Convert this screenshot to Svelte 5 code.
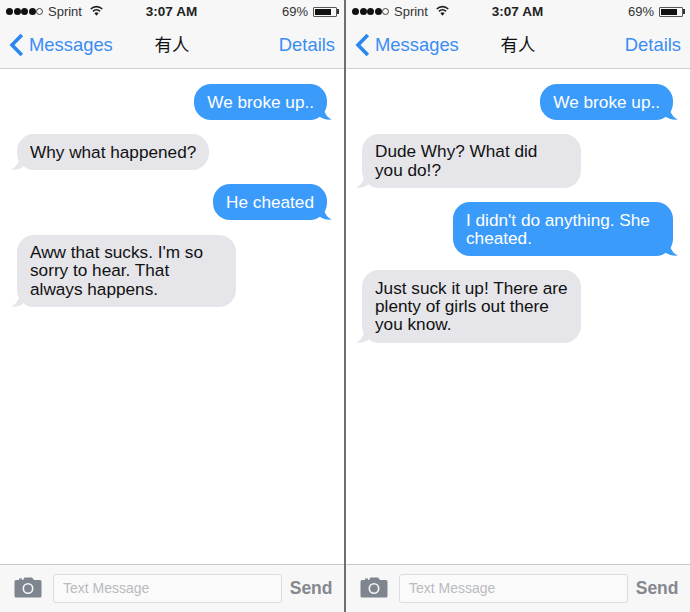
<script>
  const phones = [
    [
      { me: true, text: 'We broke up..' },
      { me: false, text: 'Why what happened?' },
      { me: true, text: 'He cheated' },
      { me: false, text: "Aww that sucks. I'm so sorry to hear. That always happens." }
    ],
    [
      { me: true, text: 'We broke up..' },
      { me: false, text: 'Dude Why? What did you do!?' },
      { me: true, text: "I didn't do anything. She cheated." },
      { me: false, text: 'Just suck it up! There are plenty of girls out there you know.' }
    ]
  ];
</script>

<div class="screens">
  {#each phones as messages}
    <section class="phone">
      <div class="top">
        <div class="status">
          <div class="left">
            <span class="dots">
              <i></i><i></i><i></i><i></i><i class="empty"></i>
            </span>
            <span class="carrier">Sprint</span>
            <svg class="wifi" width="13" height="11" viewBox="0 0 13 11">
              <path d="M0.8 4 A8 8 0 0 1 12.2 4" fill="none" stroke="#222" stroke-width="1.7" />
              <path d="M3 6.3 A5 5 0 0 1 10 6.3" fill="none" stroke="#222" stroke-width="1.7" />
              <path d="M6.5 10.8 L4.4 8.3 A2.9 2.9 0 0 1 8.6 8.3 Z" fill="#222" />
            </svg>
          </div>
          <div class="time">3:07 AM</div>
          <div class="right">
            <span>69%</span>
            <span class="battery"><b></b></span>
          </div>
        </div>
        <nav class="nav">
          <div class="back">
            <svg width="15" height="24" viewBox="0 0 15 24">
              <path d="M12.8 2 L3 12 L12.8 22" fill="none" stroke="#2b87f0" stroke-width="3.6" />
            </svg>
            <span>Messages</span>
          </div>
          <div class="title">有人</div>
          <div class="details">Details</div>
        </nav>
      </div>

      <div class="thread">
        {#each messages as m}
          <div class="bubble" class:me={m.me}>
            {m.text}
            <svg class="tail" width="12" height="10" viewBox="0 0 12 10">
              <path d="M0 0 L4 0 C5 4 8 8 12 9.5 C7 10 3 9 0 7 Z" />
            </svg>
          </div>
        {/each}
      </div>

      <div class="bottom">
        <svg class="camera" width="28" height="21" viewBox="0 0 28 21">
          <path fill-rule="evenodd" fill="#7f858e" d="M3 3 H5 V1.5 H8 V3 H9 L10.5 0.5 H18 L20 3 H26 Q27.5 3 27.5 4.5 V19 Q27.5 20.5 26 20.5 H2 Q0.5 20.5 0.5 19 V4.5 Q0.5 3 2 3 Z M14 6 A5.5 5.5 0 1 0 14 17 A5.5 5.5 0 1 0 14 6 Z M14 7.6 A3.9 3.9 0 1 1 14 15.4 A3.9 3.9 0 1 1 14 7.6 Z" />
        </svg>
        <div class="input">Text Message</div>
        <div class="send">Send</div>
      </div>
    </section>
  {/each}
</div>

<style>
  :global(body) {
    margin: 0;
    background: #fff;
  }

  .screens {
    display: flex;
    width: 690px;
    height: 612px;
    font-family: "Liberation Sans", Arial, sans-serif;
  }

  .phone {
    flex: 1;
    display: flex;
    flex-direction: column;
    min-width: 0;
  }

  .phone:first-child {
    border-right: 2px solid #6e6e6e;
  }

  .phone:last-child .thread {
    padding-left: 16px;
    gap: 13.9px;
  }

  .top {
    height: 68px;
    background: #f7f7f8;
    border-bottom: 1px solid #cfcfd1;
    flex-shrink: 0;
  }

  .status {
    display: grid;
    grid-template-columns: 1fr auto 1fr;
    align-items: center;
    height: 23px;
    padding: 0 7px 0 6px;
    font-size: 13px;
    color: #333;
  }

  .left {
    display: flex;
    align-items: center;
    gap: 5px;
  }

  .dots {
    display: flex;
    gap: 0.5px;
  }

  .dots i {
    width: 7px;
    height: 7px;
    border-radius: 50%;
    background: #111;
    box-sizing: border-box;
  }

  .dots i.empty {
    background: none;
    border: 1px solid #444;
  }

  .wifi {
    margin-left: 3px;
    margin-top: -3px;
  }

  .time {
    font-weight: 700;
    font-size: 13.5px;
    color: #222;
  }

  .right {
    display: flex;
    justify-content: flex-end;
    align-items: center;
    gap: 5px;
  }

  .battery {
    position: relative;
    display: block;
    width: 20px;
    height: 6px;
    border: 1px solid #555;
    border-radius: 1px;
    padding: 1px;
  }

  .battery::after {
    content: "";
    position: absolute;
    right: -3px;
    top: 1.5px;
    width: 2px;
    height: 5px;
    background: #333;
  }

  .battery b {
    display: block;
    width: 78%;
    height: 100%;
    background: #111;
  }

  .nav {
    display: grid;
    grid-template-columns: 1fr auto 1fr;
    align-items: center;
    height: 44px;
    padding: 0 9px;
    font-size: 18.4px;
    color: #3a8df2;
  }

  .back {
    display: flex;
    align-items: center;
    gap: 5px;
  }

  .title {
    font-family: "Noto Sans CJK SC", "Noto Sans CJK TC", sans-serif;
    font-size: 17.5px;
    color: #111;
    margin-top: -3px;
  }

  .details {
    text-align: right;
  }

  .thread {
    flex: 1;
    display: flex;
    flex-direction: column;
    align-items: flex-start;
    gap: 14.2px;
    padding: 15px 17px 0 17px;
    background: #fff;
  }

  .bubble {
    position: relative;
    max-width: 193px;
    padding: 8.5px 13px 9.2px;
    border-radius: 17px;
    background: #e5e5ea;
    color: #111;
    font-size: 17.2px;
    line-height: 18.3px;
  }

  .bubble.me {
    align-self: flex-end;
    background: #3a9bfa;
    color: #fff;
    max-width: 194px;
  }

  .tail {
    position: absolute;
    bottom: 0;
    left: -6px;
    fill: #e5e5ea;
    transform: scaleX(-1);
  }

  .me .tail {
    left: auto;
    right: -5px;
    fill: #3a9bfa;
    transform: none;
  }

  .bottom {
    height: 47px;
    flex-shrink: 0;
    display: flex;
    align-items: center;
    gap: 11px;
    padding: 0 11.5px 0 14px;
    background: #f7f7f8;
    border-top: 1px solid #c6c6c8;
  }

  .camera {
    flex-shrink: 0;
    margin-top: -2px;
  }

  .input {
    flex: 1;
    height: 27px;
    line-height: 27px;
    padding-left: 9px;
    background: #fafafb;
    border: 1px solid #dcdcde;
    border-radius: 3px;
    font-size: 14px;
    color: #b9bbc0;
  }

  .send {
    font-size: 17.5px;
    font-weight: 700;
    color: #85888e;
    margin-left: -3px;
  }
</style>
